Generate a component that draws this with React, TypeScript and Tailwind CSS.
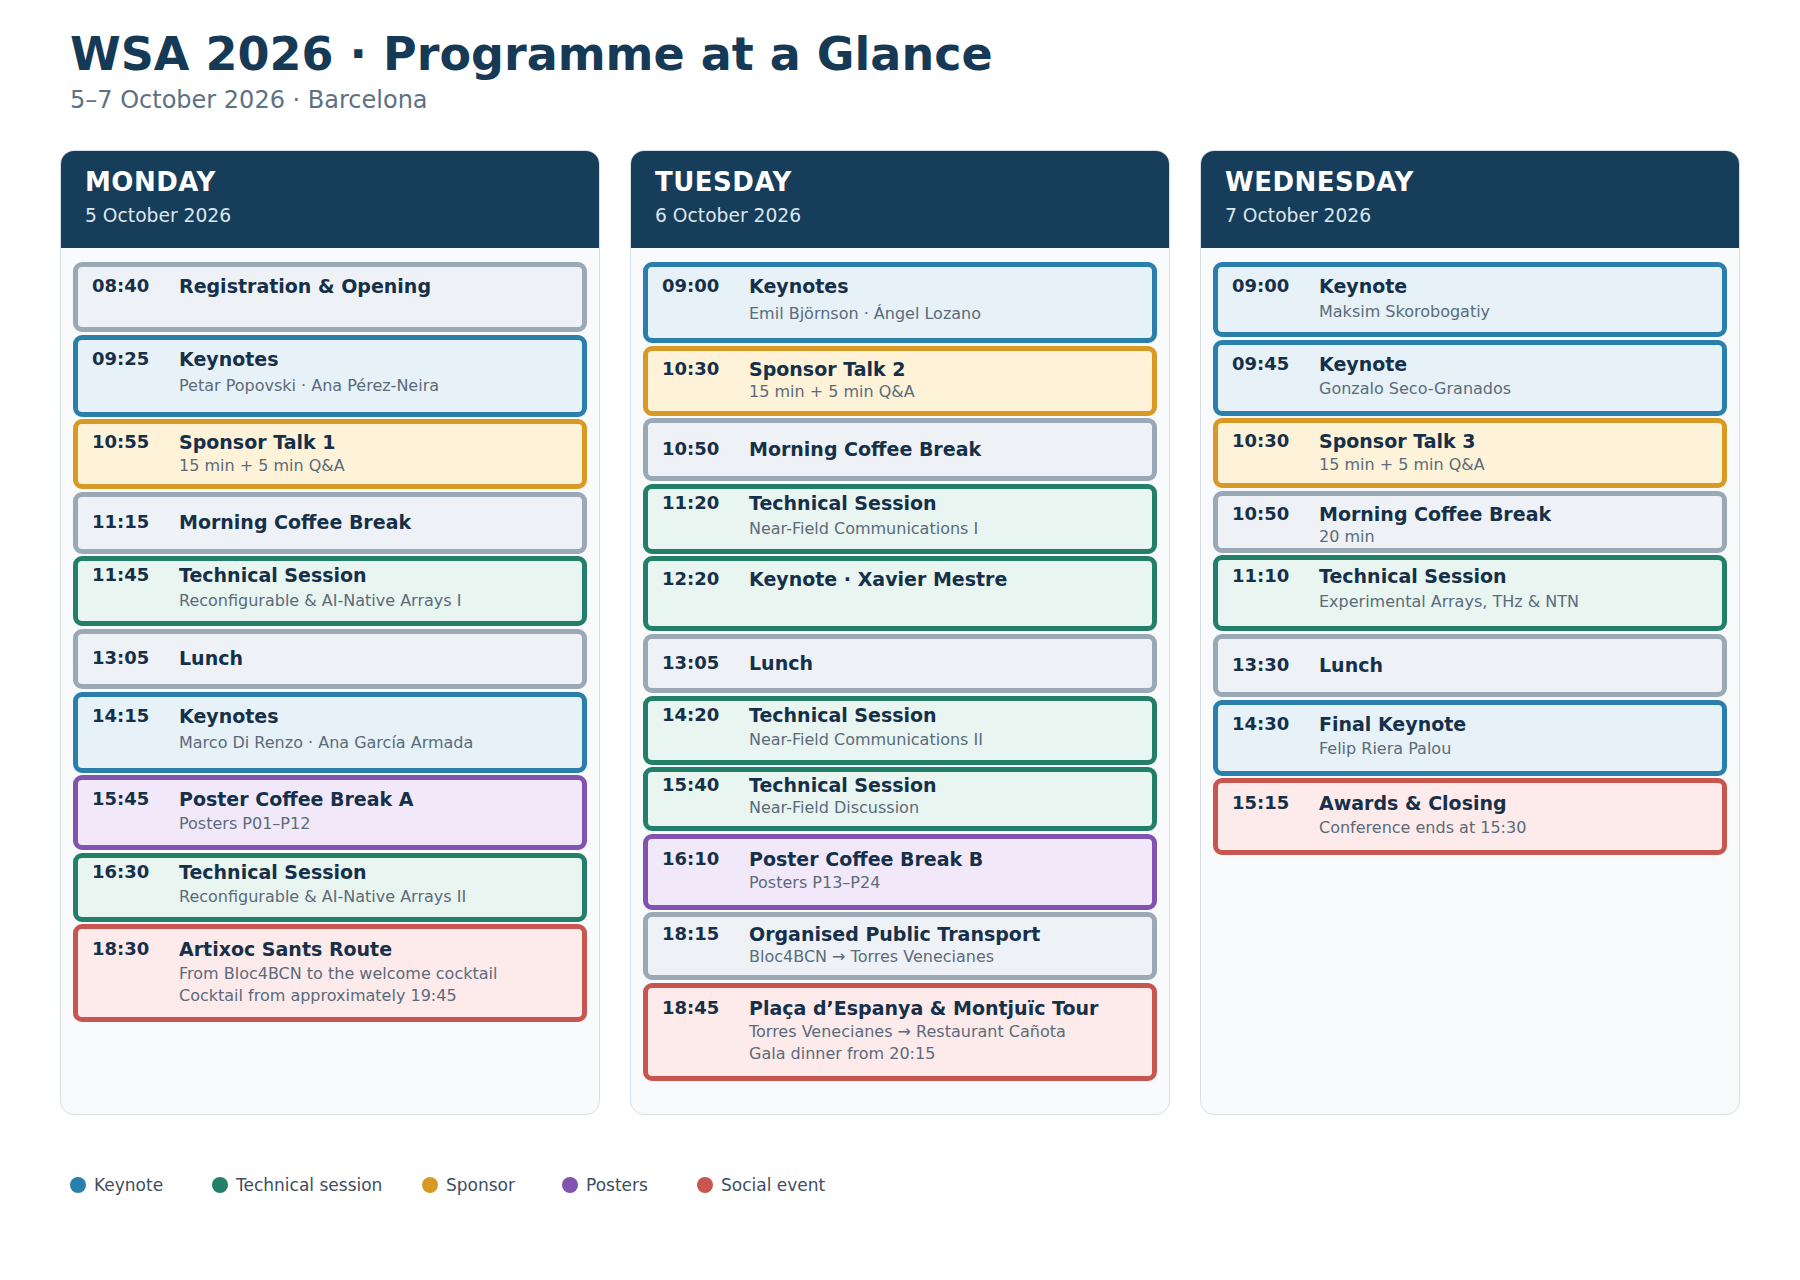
import React from "react"

type Kind = "key" | "tech" | "spon" | "post" | "soc" | "gray"

type Slot = {
  time: string
  title: string
  details?: string[]
  kind: Kind
  h: string
  pt: string
  mt?: string
}

type Day = {
  name: string
  date: string
  slots: Slot[]
}

const kindStyles: Record<Kind, string> = {
  key: "border-[#2b7fad] bg-[#e6f1f8]",
  tech: "border-[#247f68] bg-[#e8f5f0]",
  spon: "border-[#d89a24] bg-[#fef2d8]",
  post: "border-[#8054b0] bg-[#f1e8fa]",
  soc: "border-[#c8554f] bg-[#fdeaea]",
  gray: "border-[#9aa9b5] bg-[#eef2f6]",
}

const days: Day[] = [
  {
    name: "MONDAY",
    date: "5 October 2026",
    slots: [
      { time: "08:40", title: "Registration & Opening", kind: "gray", h: "h-[70px]", pt: "pt-[8px]" },
      { time: "09:25", title: "Keynotes", details: ["Petar Popovski · Ana Pérez-Neira"], kind: "key", h: "h-[82px]", pt: "pt-[8px]", mt: "mt-[5px]" },
      { time: "10:55", title: "Sponsor Talk 1", details: ["15 min + 5 min Q&A"], kind: "spon", h: "h-[70px]", pt: "pt-[7px]", mt: "mt-[2px]" },
      { time: "11:15", title: "Morning Coffee Break", kind: "gray", h: "h-[62px]", pt: "pt-[14px]" },
      { time: "11:45", title: "Technical Session", details: ["Reconfigurable & AI-Native Arrays I"], kind: "tech", h: "h-[70px]", pt: "pt-[3px]", mt: "mt-[4px]" },
      { time: "13:05", title: "Lunch", kind: "gray", h: "h-[60px]", pt: "pt-[13px]" },
      { time: "14:15", title: "Keynotes", details: ["Marco Di Renzo · Ana García Armada"], kind: "key", h: "h-[81px]", pt: "pt-[8px]", mt: "mt-[5px]" },
      { time: "15:45", title: "Poster Coffee Break A", details: ["Posters P01–P12"], kind: "post", h: "h-[75px]", pt: "pt-[8px]", mt: "mt-[3px]" },
      { time: "16:30", title: "Technical Session", details: ["Reconfigurable & AI-Native Arrays II"], kind: "tech", h: "h-[69px]", pt: "pt-[3px]", mt: "mt-[3px]" },
      {
        time: "18:30",
        title: "Artixoc Sants Route",
        details: ["From Bloc4BCN to the welcome cocktail", "Cocktail from approximately 19:45"],
        kind: "soc",
        h: "h-[98px]",
        pt: "pt-[9px]",
        mt: "mt-[3px]",
      },
    ],
  },
  {
    name: "TUESDAY",
    date: "6 October 2026",
    slots: [
      { time: "09:00", title: "Keynotes", details: ["Emil Björnson · Ángel Lozano"], kind: "key", h: "h-[81px]", pt: "pt-[8px]", mt: "mt-[6px]" },
      { time: "10:30", title: "Sponsor Talk 2", details: ["15 min + 5 min Q&A"], kind: "spon", h: "h-[70px]", pt: "pt-[7px]", mt: "mt-[1px]" },
      { time: "10:50", title: "Morning Coffee Break", kind: "gray", h: "h-[63px]", pt: "pt-[15px]" },
      { time: "11:20", title: "Technical Session", details: ["Near-Field Communications I"], kind: "tech", h: "h-[70px]", pt: "pt-[3px]", mt: "mt-[4px]" },
      { time: "12:20", title: "Keynote · Xavier Mestre", kind: "tech", h: "h-[75px]", pt: "pt-[7px]" },
      { time: "13:05", title: "Lunch", kind: "gray", h: "h-[59px]", pt: "pt-[13px]" },
      { time: "14:20", title: "Technical Session", details: ["Near-Field Communications II"], kind: "tech", h: "h-[69px]", pt: "pt-[3px]", mt: "mt-[3px]" },
      { time: "15:40", title: "Technical Session", details: ["Near-Field Discussion"], kind: "tech", h: "h-[64px]", pt: "pt-[2px]", mt: "mt-[1px]" },
      { time: "16:10", title: "Poster Coffee Break B", details: ["Posters P13–P24"], kind: "post", h: "h-[76px]", pt: "pt-[9px]", mt: "mt-[2px]" },
      { time: "18:15", title: "Organised Public Transport", details: ["Bloc4BCN → Torres Venecianes"], kind: "gray", h: "h-[68px]", pt: "pt-[6px]", mt: "mt-[1px]" },
      {
        time: "18:45",
        title: "Plaça d’Espanya & Montjuïc Tour",
        details: ["Torres Venecianes → Restaurant Cañota", "Gala dinner from 20:15"],
        kind: "soc",
        h: "h-[98px]",
        pt: "pt-[9px]",
        mt: "mt-[2px]",
      },
    ],
  },
  {
    name: "WEDNESDAY",
    date: "7 October 2026",
    slots: [
      { time: "09:00", title: "Keynote", details: ["Maksim Skorobogatiy"], kind: "key", h: "h-[75px]", pt: "pt-[8px]", mt: "mt-[4px]" },
      { time: "09:45", title: "Keynote", details: ["Gonzalo Seco-Granados"], kind: "key", h: "h-[76px]", pt: "pt-[8px]", mt: "mt-[3px]" },
      { time: "10:30", title: "Sponsor Talk 3", details: ["15 min + 5 min Q&A"], kind: "spon", h: "h-[70px]", pt: "pt-[7px]", mt: "mt-[2px]" },
      { time: "10:50", title: "Morning Coffee Break", details: ["20 min"], kind: "gray", h: "h-[62px]", pt: "pt-[7px]", mt: "mt-[1px]" },
      { time: "11:10", title: "Technical Session", details: ["Experimental Arrays, THz & NTN"], kind: "tech", h: "h-[76px]", pt: "pt-[5px]", mt: "mt-[4px]" },
      { time: "13:30", title: "Lunch", kind: "gray", h: "h-[63px]", pt: "pt-[15px]" },
      { time: "14:30", title: "Final Keynote", details: ["Felip Riera Palou"], kind: "key", h: "h-[76px]", pt: "pt-[8px]", mt: "mt-[3px]" },
      { time: "15:15", title: "Awards & Closing", details: ["Conference ends at 15:30"], kind: "soc", h: "h-[77px]", pt: "pt-[9px]", mt: "mt-[3px]" },
    ],
  },
]

const legend = [
  { label: "Keynote", dot: "bg-[#2b7fad]", w: "w-[142px]" },
  { label: "Technical session", dot: "bg-[#247f68]", w: "w-[210px]" },
  { label: "Sponsor", dot: "bg-[#d89a24]", w: "w-[140px]" },
  { label: "Posters", dot: "bg-[#8054b0]", w: "w-[135px]" },
  { label: "Social event", dot: "bg-[#c8554f]", w: "" },
]

function SlotCard({ slot }: { slot: Slot }) {
  return (
    <div className={`flex rounded-[9px] border-[5px] px-[14px] ${kindStyles[slot.kind]} ${slot.h} ${slot.pt}`}>
      <div className="w-[87px] shrink-0 text-[18px] font-bold leading-[22px] text-[#16304a]">{slot.time}</div>
      <div className="min-w-0 flex-1">
        <div className="text-[19px] font-bold leading-[22px] text-[#16304a]">{slot.title}</div>
        {slot.details && (
          <div className={`text-[16px] leading-[22px] text-[#5b6b7a] ${slot.mt ?? ""}`}>
            {slot.details.map((line, i) => (
              <div key={i}>{line}</div>
            ))}
          </div>
        )}
      </div>
    </div>
  )
}

function DayColumn({ day }: { day: Day }) {
  return (
    <div className="flex h-[965px] flex-col overflow-hidden rounded-[14px] border border-[#d7dfe6] bg-[#f8fafc]">
      <div className="h-[97px] shrink-0 bg-[#163d5a] px-[24px] pt-[16px]">
        <div className="text-[26px] font-bold leading-[30px] tracking-[0.5px] text-white">{day.name}</div>
        <div className="mt-[8px] text-[18.7px] leading-[22px] text-[#dbe6ef]">{day.date}</div>
      </div>
      <div className="flex flex-col gap-[2.6px] px-[12px] pt-[14px]">
        {day.slots.map((slot, i) => (
          <SlotCard key={i} slot={slot} />
        ))}
      </div>
    </div>
  )
}

export default function App() {
  return (
    <div className="min-h-[1280px] w-[1800px] bg-white px-[60px] font-['DejaVu_Sans',sans-serif]">
      <div className="pl-[10px] pt-[27px]">
        <h1 className="text-[46px] font-bold leading-[54px] text-[#163a56]">WSA 2026 · Programme at a Glance</h1>
        <p className="mt-[4px] text-[24px] leading-[30px] text-[#5c7184]">5–7 October 2026 · Barcelona</p>
      </div>

      <div className="mt-[35px] grid grid-cols-3 gap-[30px]">
        {days.map((day) => (
          <DayColumn key={day.name} day={day} />
        ))}
      </div>

      <div className="mt-[59px] flex items-center pl-[10px]">
        {legend.map((item) => (
          <div key={item.label} className={`flex shrink-0 items-center gap-[8px] ${item.w}`}>
            <span className={`h-[16px] w-[16px] shrink-0 rounded-full ${item.dot}`} />
            <span className="text-[17px] leading-[22px] text-[#3e4e5e]">{item.label}</span>
          </div>
        ))}
      </div>
    </div>
  )
}
